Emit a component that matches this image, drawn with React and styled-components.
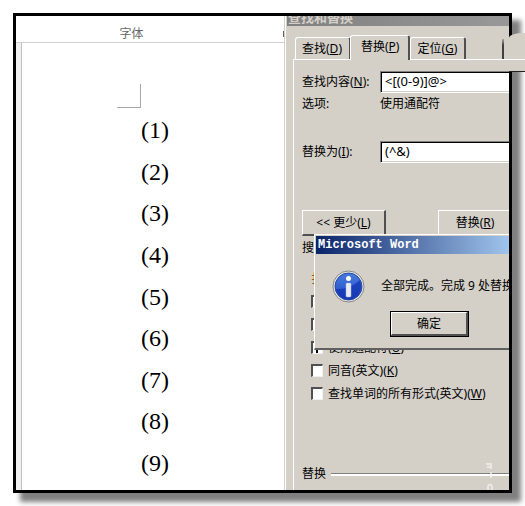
import React, { useState } from 'react';
import styled, { createGlobalStyle, css } from 'styled-components';

const GlobalStyle = createGlobalStyle`
    * {
        box-sizing: border-box;
    }

    body {
        margin: 0;
        background: #fff;
        color: #000;
        font: 12px/16px 'Noto Sans', 'Noto Sans CJK SC', sans-serif;
        overflow: hidden;
    }

    button,
    input {
        font: inherit;
        color: inherit;
        border-radius: 0;
    }
`;

const Frame = styled.main`
    position: relative;
    margin: 13px;
    border: 3px solid #000;
    box-shadow: 8px 8px 5px 1px #808080;
`;

const Screen = styled.div`
    display: flex;
    height: 474px;
    overflow: hidden;
    background: #fff;
`;

const DocumentPane = styled.section`
    flex: 1;
    min-width: 0;
    display: flex;
    flex-direction: column;
`;

const Ribbon = styled.div`
    display: flex;
    align-items: flex-end;
    justify-content: space-between;
    height: 27px;
    border-bottom: 1px solid #d0d0d0;
`;

const RibbonLabel = styled.div`
    flex: 1;
    padding-right: 36px;
    text-align: center;
    color: #666;
`;

const RibbonMark = styled.div`
    width: 1px;
    height: 6px;
    margin: 0 1px 5px 0;
    background: #606060;
`;

const Page = styled.div`
    flex: 1;
    margin-left: 5px;
    padding: 41px 0 0 95px;
    border-left: 1px solid #c0c0c0;
    box-shadow: -5px 0 0 #f0f0f0;
`;

const MarginCorner = styled.div`
    width: 24px;
    height: 24px;
    border: solid #a8a8a8;
    border-width: 0 1px 1px 0;
`;

const NumberList = styled.ul`
    display: flex;
    flex-direction: column;
    justify-content: space-between;
    height: 361px;
    margin: 8px 0 0;
    padding: 0 0 0 24px;
    list-style: none;
    font: 24px/28px 'Liberation Serif', serif;
`;

const Dialog = styled.section`
    position: relative;
    flex: 0 0 224px;
    min-width: 0;
    display: flex;
    flex-direction: column;
    padding-left: 1px;
    border-left: 1px solid #fff;
    background: #d4d0c8;
    white-space: nowrap;
    box-shadow: -1px 0 0 #d4d0c8;
`;

const DialogTitle = styled.h1`
    flex: none;
    height: 10px;
    margin: 0;
    padding-left: 1px;
    background: linear-gradient(90deg, #808080, #989898);
    color: #d4d0c8;
    font-size: 13px;
    line-height: 2px;
    overflow: hidden;
`;

const Tabs = styled.div`
    flex: none;
    display: flex;
    align-items: flex-end;
    height: 33px;
    padding: 0 5px 0 8px;
`;

const Tab = styled.button`
    height: 22px;
    padding: 0 7px 0 6px;
    border: solid;
    border-width: 1px 2px 0 1px;
    border-color: #fff #505050 #fff #fff;
    border-radius: 3px 3px 0 0;
    background: #d4d0c8;

    ${({ $active }) =>
        $active &&
        css`
            position: relative;
            height: 25px;
            margin: 0 0 -1px -1px;
            padding: 0 9px 2px 10px;
        `}
`;

const TabStripEnd = styled.div`
    width: 2px;
    height: 20px;
    margin-left: auto;
    background: linear-gradient(#a8a8a0, #404040 30%);
`;

const TabPanel = styled.div`
    flex: 1;
    min-height: 0;
    min-width: 0;
    margin-left: 6px;
    padding: 11px 0 0 8px;
    border: solid #fff;
    border-width: 1px 0 0 1px;
    overflow: hidden;
`;

const Field = styled.div`
    display: flex;
    align-items: center;
    height: 22px;
    margin-top: ${({ $top }) => $top || 0}px;
`;

const FieldLabel = styled.label`
    flex: 0 0 78px;
`;

const TextInput = styled.input`
    flex: 1;
    min-width: 0;
    height: 22px;
    padding: 0 4px 2px;
    border: solid;
    border-width: 1px 0 1px 1px;
    border-color: #808080 #fff #fff #808080;
    background: #fff;
    box-shadow: inset 1px 1px 0 #000, inset 0 -1px 0 #d4d0c8;
    font-size: 13px;
    outline: none;
`;

const ButtonRow = styled.div`
    display: flex;
    gap: 52px;
    margin-top: 47px;
`;

const PushButton = styled.button`
    flex: none;
    width: ${({ $width }) => $width || 84}px;
    height: 26px;
    padding: 0;
    border: solid;
    border-width: 1px 2px 2px 1px;
    border-color: #fff #505050 #505050 #fff;
    background: #d4d0c8;
`;

const DefaultButton = styled(PushButton)`
    outline: 1px solid #000;
    outline-offset: -1px;
    border-width: 2px 3px 3px 2px;
`;

const SearchLabel = styled.div`
    margin-top: 4px;
`;

const Options = styled.div`
    display: flex;
    flex-direction: column;
    margin: 11px 0 0 9px;
`;

const Option = styled.label`
    display: flex;
    align-items: center;
    gap: 5px;
    height: 23px;
`;

const OptionHeading = styled(Option)`
    color: #a05010;
`;

const CheckBox = styled.input`
    appearance: none;
    width: 12px;
    height: 13px;
    margin: 0;
    border: solid;
    border-width: 2px 1px 1px 2px;
    border-color: #505050 #f0f0f0 #f0f0f0 #505050;
    background: #fff;

    &:checked {
        background: linear-gradient(90deg, #fff 30%, #000 30%, #000 50%, #fff 50%);
    }
`;

const GroupTitle = styled.div`
    display: flex;
    align-items: center;
    gap: 5px;
    margin-top: 61px;

    &::after {
        content: '';
        flex: 1;
        height: 2px;
        border-top: 1px solid #808080;
        background: #fff;
    }
`;

const FormatRow = styled.div`
    display: flex;
    gap: 8px;
    margin: 8px 0 0 9px;
`;

const MessageBox = styled.div`
    position: absolute;
    top: 218px;
    left: 28px;
    right: 0;
    height: 116px;
    padding: 1px 0 0 1px;
    border: solid;
    border-width: 1px 0 2px 1px;
    border-color: #fff #fff #606060 #fff;
    background: #d4d0c8;
    overflow: hidden;
`;

const MessageTitle = styled.h2`
    height: 18px;
    margin: 0;
    padding-left: 2px;
    background: linear-gradient(90deg, #0a246a, #a0c4ec);
    color: #fff;
    font: bold 12px/18px 'Liberation Mono', monospace;
`;

const MessageBody = styled.div`
    display: flex;
    align-items: center;
    gap: 16px;
    height: 34px;
    margin: 15px 0 0 16px;
`;

const MessageActions = styled.div`
    padding: 8px 0 0 74px;
`;

const TornEdge = styled.div`
    position: absolute;
    top: 17px;
    left: 100%;
    width: 16px;
    height: 39px;
    padding-top: 26px;
    border-top-left-radius: 14px 5px;
    border-bottom: 1px solid #202020;
    background: #d4d0c8;

    &::before {
        content: '';
        display: block;
        height: 1px;
        background: #fff;
    }
`;

const Watermark = styled.svg`
    position: absolute;
    right: 14px;
    bottom: 0;
`;

const InfoSvg = styled.svg`
    flex: none;
`;

const InfoIcon = () => (
    <InfoSvg width="33" height="33" viewBox="0 0 33 33" aria-hidden="true">
        <defs>
            <linearGradient id="ball" x1="0" y1="0" x2="0" y2="1">
                <stop offset="0" stopColor="#4a7cdc" />
                <stop offset="1" stopColor="#1c48c8" />
            </linearGradient>
        </defs>
        <circle cx="16.5" cy="16.5" r="15.5" fill="#e8e8e8" stroke="#858585" />
        <circle cx="16.5" cy="16.5" r="13.5" fill="url(#ball)" stroke="#2448a0" />
        <path d="M4 19 Q17 20 28 10 Q31 20 25 26 Q16 33 8 26 Q4 22 4 19Z" fill="#1230b0" opacity="0.7" />
        <circle cx="16.5" cy="8.5" r="2.5" fill="#fff" />
        <rect x="14" y="13" width="5" height="14" rx="1" fill="#e8ecf4" stroke="#a8b4d0" strokeWidth="0.5" />
    </InfoSvg>
);

const numbers = [1, 2, 3, 4, 5, 6, 7, 8, 9];

const App = () => {
    const [tab, setTab] = useState('P');
    const [find, setFind] = useState('<[(0-9)]@>');
    const [replace, setReplace] = useState('(^&)');

    return (
        <>
            <GlobalStyle />
            <Frame>
                <Screen>
                    <DocumentPane>
                        <Ribbon>
                            <RibbonLabel>字体</RibbonLabel>
                            <RibbonMark />
                        </Ribbon>
                        <Page>
                            <MarginCorner />
                            <NumberList>
                                {numbers.map((n) => (
                                    <li key={n}>({n})</li>
                                ))}
                            </NumberList>
                        </Page>
                    </DocumentPane>
                    <Dialog>
                        <DialogTitle>查找和替换</DialogTitle>
                        <Tabs>
                            <Tab $active={tab === 'D'} onClick={() => setTab('D')}>查找(<u>D</u>)</Tab>
                            <Tab $active={tab === 'P'} onClick={() => setTab('P')}>替换(<u>P</u>)</Tab>
                            <Tab $active={tab === 'G'} onClick={() => setTab('G')}>定位(<u>G</u>)</Tab>
                            <TabStripEnd />
                        </Tabs>
                        <TabPanel>
                            <Field>
                                <FieldLabel htmlFor="find">查找内容(<u>N</u>):</FieldLabel>
                                <TextInput id="find" value={find} onChange={(e) => setFind(e.target.value)} />
                            </Field>
                            <Field>
                                <FieldLabel as="span">选项:</FieldLabel>
                                <span>使用通配符</span>
                            </Field>
                            <Field $top={26}>
                                <FieldLabel htmlFor="replace">替换为(<u>I</u>):</FieldLabel>
                                <TextInput id="replace" value={replace} onChange={(e) => setReplace(e.target.value)} />
                            </Field>
                            <ButtonRow>
                                <PushButton>&lt;&lt; 更少(<u>L</u>)</PushButton>
                                <PushButton $width={75}>替换(<u>R</u>)</PushButton>
                            </ButtonRow>
                            <SearchLabel>搜</SearchLabel>
                            <Options>
                                <OptionHeading as="div">扌</OptionHeading>
                                <Option><CheckBox type="checkbox" /></Option>
                                <Option><CheckBox type="checkbox" /></Option>
                                <Option>
                                    <CheckBox type="checkbox" defaultChecked />
                                    <span>使用通配符(<u>U</u>)</span>
                                </Option>
                                <Option>
                                    <CheckBox type="checkbox" />
                                    <span>同音(英文)(<u>K</u>)</span>
                                </Option>
                                <Option>
                                    <CheckBox type="checkbox" />
                                    <span>查找单词的所有形式(英文)(<u>W</u>)</span>
                                </Option>
                            </Options>
                            <GroupTitle>替换</GroupTitle>
                            <FormatRow>
                                <PushButton $width={75} />
                                <PushButton $width={29} />
                                <PushButton $width={29} />
                                <PushButton $width={29} />
                            </FormatRow>
                        </TabPanel>
                        <MessageBox role="alertdialog">
                            <MessageTitle>Microsoft Word</MessageTitle>
                            <MessageBody>
                                <InfoIcon />
                                <span>全部完成。完成 9 处替换</span>
                            </MessageBody>
                            <MessageActions>
                                <DefaultButton $width={79}>确定</DefaultButton>
                            </MessageActions>
                        </MessageBox>
                        <Watermark width="10" height="28" viewBox="0 0 10 28" fill="none" stroke="#f2f0ec" strokeWidth="1.5" aria-hidden="true">
                            <path d="M1 2 H6 V7 M2 5 H5 M6 10 V12 M6 14 V16 M3 28 V24 Q5 21 7 24 V28" />
                        </Watermark>
                    </Dialog>
                </Screen>
                <TornEdge />
            </Frame>
        </>
    );
};

export default App;
